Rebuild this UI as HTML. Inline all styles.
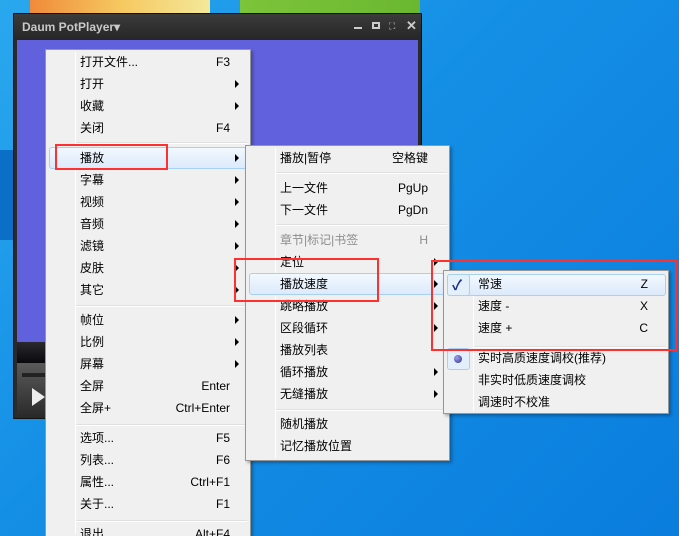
<!DOCTYPE html>
<html style="overflow:hidden;width:679px;height:536px"><head><meta charset="utf-8"><style>
*{margin:0;padding:0;box-sizing:border-box}
html,body{overflow:hidden}
body{width:679px;height:536px;position:relative;background:linear-gradient(135deg,#2aa8ee 0%,#1590e6 40%,#0a7ddd 100%);font-family:"Liberation Sans","Noto Sans CJK SC",sans-serif;font-size:12px;color:#000}
.a{position:absolute}
.menu{position:absolute;background:#f0f0f0;border:1px solid #979797;box-shadow:2px 2px 3px rgba(0,0,0,.3)}
.col{position:absolute;top:2px;bottom:2px;width:1px;background:#e2e3e3;border-right:1px solid #fff}
.r{position:absolute;height:22px;line-height:22px;white-space:nowrap}
.k{position:absolute;height:22px;line-height:22px;text-align:right;white-space:nowrap}
.ar{position:absolute;width:0;height:0;border-top:4px solid transparent;border-bottom:4px solid transparent;border-left:4px solid #000}
.sep{position:absolute;height:2px;border-top:1px solid #e0e0e0;border-bottom:1px solid #fff}
.hl{position:absolute;height:22px;border:1px solid #a8d0f2;border-radius:3px;background:linear-gradient(#f2f8fe,#dceafb)}
.red{position:absolute;border:2px solid #ff3030}
</style></head><body>
<div class="a" style="left:30px;top:0;width:180px;height:14px;background:linear-gradient(90deg,#f08a3a,#f6c860,#f4e89a)"></div>
<div class="a" style="left:240px;top:0;width:180px;height:14px;background:linear-gradient(90deg,#7cc43a,#6ab830)"></div>
<div class="a" style="left:0;top:150px;width:14px;height:90px;background:#0b6fc8"></div>
<div class="a" style="left:13px;top:13px;width:409px;height:406px;background:#2a2a2a;border:1px solid #111"></div>
<div class="a" style="left:14px;top:14px;width:407px;height:26px;background:linear-gradient(#3b3b3b,#262626)"></div>
<div class="a" style="left:22px;top:20px;color:#c8c8c8;font-weight:bold;font-size:12px">Daum PotPlayer▾</div>
<div class="a" style="left:354px;top:27px;width:8px;height:2px;background:#ccc"></div>
<div class="a" style="left:372px;top:22px;width:8px;height:7px;border:2px solid #ccc"></div>
<div class="a" style="left:389px;top:21px;color:#ccc;font-size:9px">⛶</div>
<div class="a" style="left:406px;top:18px;color:#ccc;font-size:13px;font-weight:bold">✕</div>
<div class="a" style="left:17px;top:40px;width:401px;height:302px;background:#6161de"></div>
<div class="a" style="left:17px;top:342px;width:401px;height:21px;background:linear-gradient(#2a2a2e,#0a0a0e)"></div>
<div class="a" style="left:17px;top:363px;width:401px;height:52px;background:linear-gradient(#5a5a5a,#2c2c2c)"></div>
<div class="a" style="left:22px;top:373px;width:30px;height:4px;background:#222"></div>
<div class="a" style="left:32px;top:388px;border-top:9px solid transparent;border-bottom:9px solid transparent;border-left:13px solid #eee"></div>

<div class="menu" style="left:45px;top:49px;width:206px;height:487px;border-bottom:none">
<div class="col" style="left:29px"></div>
</div>
<div class="hl" style="left:49px;top:147px;width:198px"></div>
<div class="sep" style="left:76px;top:142px;width:171px"></div>
<div class="sep" style="left:76px;top:305px;width:171px"></div>
<div class="sep" style="left:76px;top:424px;width:171px"></div>
<div class="sep" style="left:76px;top:520px;width:171px"></div>
<div class="r" style="left:80px;top:51px">打开文件...</div><div class="k" style="left:150px;width:80px;top:51px">F3</div>
<div class="r" style="left:80px;top:73px">打开</div><div class="ar" style="left:235px;top:80px"></div>
<div class="r" style="left:80px;top:95px">收藏</div><div class="ar" style="left:235px;top:102px"></div>
<div class="r" style="left:80px;top:117px">关闭</div><div class="k" style="left:150px;width:80px;top:117px">F4</div>
<div class="r" style="left:80px;top:147px">播放</div><div class="ar" style="left:235px;top:154px"></div>
<div class="r" style="left:80px;top:169px">字幕</div><div class="ar" style="left:235px;top:176px"></div>
<div class="r" style="left:80px;top:191px">视频</div><div class="ar" style="left:235px;top:198px"></div>
<div class="r" style="left:80px;top:213px">音频</div><div class="ar" style="left:235px;top:220px"></div>
<div class="r" style="left:80px;top:235px">滤镜</div><div class="ar" style="left:235px;top:242px"></div>
<div class="r" style="left:80px;top:257px">皮肤</div><div class="ar" style="left:235px;top:264px"></div>
<div class="r" style="left:80px;top:279px">其它</div><div class="ar" style="left:235px;top:286px"></div>
<div class="r" style="left:80px;top:309px">帧位</div><div class="ar" style="left:235px;top:316px"></div>
<div class="r" style="left:80px;top:331px">比例</div><div class="ar" style="left:235px;top:338px"></div>
<div class="r" style="left:80px;top:353px">屏幕</div><div class="ar" style="left:235px;top:360px"></div>
<div class="r" style="left:80px;top:375px">全屏</div><div class="k" style="left:130px;width:100px;top:375px">Enter</div>
<div class="r" style="left:80px;top:397px">全屏+</div><div class="k" style="left:130px;width:100px;top:397px">Ctrl+Enter</div>
<div class="r" style="left:80px;top:427px">选项...</div><div class="k" style="left:150px;width:80px;top:427px">F5</div>
<div class="r" style="left:80px;top:449px">列表...</div><div class="k" style="left:150px;width:80px;top:449px">F6</div>
<div class="r" style="left:80px;top:471px">属性...</div><div class="k" style="left:130px;width:100px;top:471px">Ctrl+F1</div>
<div class="r" style="left:80px;top:493px">关于...</div><div class="k" style="left:150px;width:80px;top:493px">F1</div>
<div class="r" style="left:80px;top:523px">退出</div><div class="k" style="left:130px;width:100px;top:523px">Alt+F4</div>

<div class="menu" style="left:245px;top:145px;width:205px;height:316px">
<div class="col" style="left:29px"></div>
</div>
<div class="hl" style="left:249px;top:273px;width:197px"></div>
<div class="sep" style="left:276px;top:172px;width:171px"></div>
<div class="sep" style="left:276px;top:224px;width:171px"></div>
<div class="sep" style="left:276px;top:409px;width:171px"></div>
<div class="r" style="left:280px;top:147px">播放|暂停</div><div class="k" style="left:350px;width:78px;top:147px">空格键</div>
<div class="r" style="left:280px;top:177px">上一文件</div><div class="k" style="left:350px;width:78px;top:177px">PgUp</div>
<div class="r" style="left:280px;top:199px">下一文件</div><div class="k" style="left:350px;width:78px;top:199px">PgDn</div>
<div class="r" style="left:280px;top:229px;color:#8d8d8d">章节|标记|书签</div><div class="k" style="left:350px;width:78px;top:229px;color:#8d8d8d">H</div>
<div class="r" style="left:280px;top:251px">定位</div><div class="ar" style="left:434px;top:258px"></div>
<div class="r" style="left:280px;top:273px">播放速度</div><div class="ar" style="left:434px;top:280px"></div>
<div class="r" style="left:280px;top:295px">跳略播放</div><div class="ar" style="left:434px;top:302px"></div>
<div class="r" style="left:280px;top:317px">区段循环</div><div class="ar" style="left:434px;top:324px"></div>
<div class="r" style="left:280px;top:339px">播放列表</div>
<div class="r" style="left:280px;top:361px">循环播放</div><div class="ar" style="left:434px;top:368px"></div>
<div class="r" style="left:280px;top:383px">无缝播放</div><div class="ar" style="left:434px;top:390px"></div>
<div class="r" style="left:280px;top:413px">随机播放</div>
<div class="r" style="left:280px;top:435px">记忆播放位置</div>

<div class="menu" style="left:443px;top:270px;width:226px;height:144px">
<div class="col" style="left:29px"></div>
</div>
<div class="hl" style="left:447px;top:274px;width:219px"></div>
<div class="a" style="left:447px;top:274px;width:23px;height:22px;border:1px solid #a8d0f2;border-radius:3px;background:#e4effc"></div>
<div class="a" style="left:452px;top:274px;line-height:22px;color:#1a2a8a;font-size:14px;font-weight:bold">✓</div>
<div class="sep" style="left:474px;top:346px;width:192px"></div>
<div class="a" style="left:447px;top:348px;width:23px;height:22px;border:1px solid #a8d0f2;border-radius:3px;background:#e4effc"></div>
<div class="a" style="left:454px;top:355px;width:8px;height:8px;border-radius:50%;background:radial-gradient(circle at 35% 35%,#a0a0e8,#303090)"></div>
<div class="r" style="left:478px;top:273px">常速</div><div class="k" style="left:580px;width:68px;top:273px">Z</div>
<div class="r" style="left:478px;top:295px">速度 -</div><div class="k" style="left:580px;width:68px;top:295px">X</div>
<div class="r" style="left:478px;top:317px">速度 +</div><div class="k" style="left:580px;width:68px;top:317px">C</div>
<div class="r" style="left:478px;top:347px">实时高质速度调校(推荐)</div>
<div class="r" style="left:478px;top:369px">非实时低质速度调校</div>
<div class="r" style="left:478px;top:391px">调速时不校准</div>

<div class="red" style="left:55px;top:144px;width:113px;height:26px"></div>
<div class="red" style="left:234px;top:258px;width:145px;height:44px"></div>
<div class="red" style="left:431px;top:260px;width:246px;height:91px"></div>
</body></html>
